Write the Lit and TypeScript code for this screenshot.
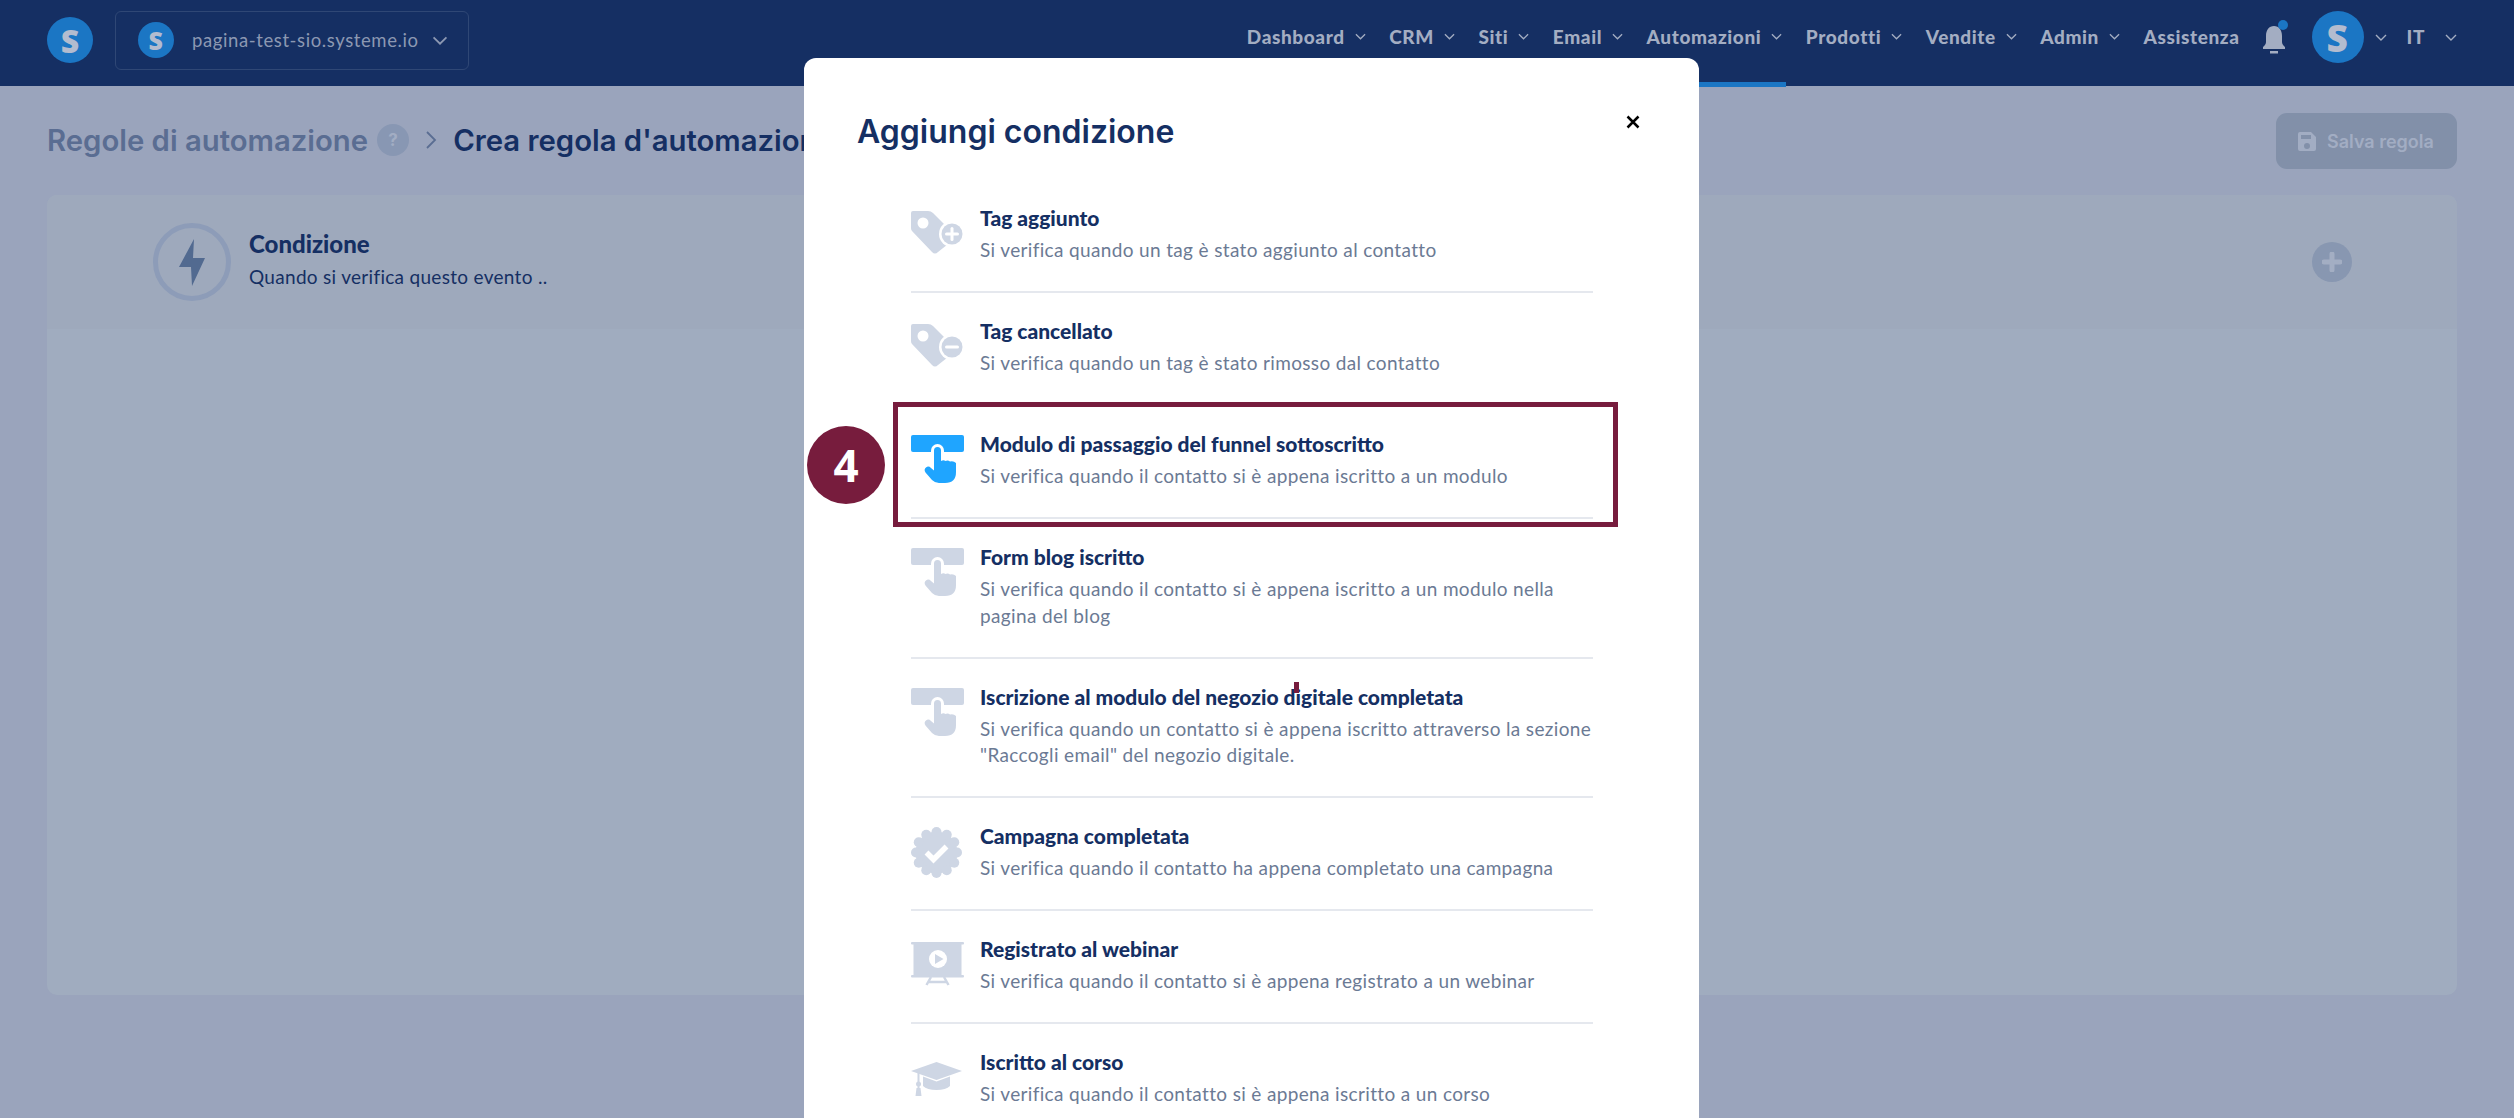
import { LitElement, css, html, nothing, svg } from 'lit';
import { customElement } from 'lit/decorators.js';
import { classMap } from 'lit/directives/class-map.js';

const NAV = [
  { label: 'Dashboard', arrow: true },
  { label: 'CRM', arrow: true },
  { label: 'Siti', arrow: true },
  { label: 'Email', arrow: true },
  { label: 'Automazioni', arrow: true, active: true },
  { label: 'Prodotti', arrow: true },
  { label: 'Vendite', arrow: true },
  { label: 'Admin', arrow: true },
  { label: 'Assistenza', arrow: false },
];

const ITEMS = [
  { icon: 'tagPlus', title: 'Tag aggiunto', desc: 'Si verifica quando un tag è stato aggiunto al contatto' },
  { icon: 'tagMinus', title: 'Tag cancellato', desc: 'Si verifica quando un tag è stato rimosso dal contatto' },
  { icon: 'hand', active: true, title: 'Modulo di passaggio del funnel sottoscritto', desc: 'Si verifica quando il contatto si è appena iscritto a un modulo' },
  { icon: 'hand', title: 'Form blog iscritto', desc: 'Si verifica quando il contatto si è appena iscritto a un modulo nella pagina del blog' },
  { icon: 'hand', title: 'Iscrizione al modulo del negozio digitale completata', desc: 'Si verifica quando un contatto si è appena iscritto attraverso la sezione "Raccogli email" del negozio digitale.' },
  { icon: 'badge', title: 'Campagna completata', desc: 'Si verifica quando il contatto ha appena completato una campagna' },
  { icon: 'webinar', title: 'Registrato al webinar', desc: 'Si verifica quando il contatto si è appena registrato a un webinar' },
  { icon: 'cap', title: 'Iscritto al corso', desc: 'Si verifica quando il contatto si è appena iscritto a un corso' },
];

const chevron = (cls: string) => html`<svg class=${cls} viewBox="0 0 12 7" fill="none" stroke="currentColor" stroke-width="1.4"><path d="M1 1l5 5 5-5" /></svg>`;

const logo = (cls: string) => html`<span class=${cls}>S</span>`;

const tag = (minus: boolean) => html`<svg class="ico tag" viewBox="0 0 53 44">
  <path d="M2 0H17Q20 0 22 2L46 26L27 41Q24 44 21 41L1 20Q0 19 0 17V2Q0 0 2 0Z" />
  <circle cx="12" cy="12" r="5.5" fill="#fff" />
  <circle cx="41" cy="23" r="13" fill="#fff" />
  <circle cx="41" cy="23" r="10.5" />
  <path d="M35.5 23H46.5" stroke="#fff" stroke-width="3" stroke-linecap="round" />
  ${minus ? nothing : svg`<path d="M41 17.5V28.5" stroke="#fff" stroke-width="3" stroke-linecap="round" />`}
</svg>`;

const hand = () => html`<svg class="ico hand" viewBox="0 0 53 48">
  <rect width="53" height="17" rx="2" />
  <rect x="20" y="9" width="13" height="24" rx="6.500" fill="#fff" />
  <path d="M23 15.500a3.500 3.500 0 0 1 7 0V26q2.500-1.500 4.500 0q2.500-1 4.500 .5q3.500-1 6 1.500V37q0 11-11 11H28q-4 0-7-3L14.500 37.500q-2-3 .5-5t5 .5l3 2.500Z" />
</svg>`;

const badge = () => {
  const lobes = Array.from({ length: 12 }, (_, i) => {
    const a = (i * Math.PI) / 6;
    return svg`<circle cx=${25.5 + 20.5 * Math.cos(a)} cy=${25.5 + 20.5 * Math.sin(a)} r="5" />`;
  });
  return html`<svg class="ico badge" viewBox="0 0 51 51">
    <circle cx="25.5" cy="25.5" r="21" />
    ${lobes}
    <path d="M15.500 25.500L22.500 32.500L35.500 19.500" fill="none" stroke="#fff" stroke-width="5.500" />
  </svg>`;
};

const webinar = () => html`<svg class="ico webinar" viewBox="0 0 53 44">
  <rect width="53" height="2.500" rx="1" />
  <rect x="2.500" y="2" width="48" height="32" />
  <rect y="33" width="53" height="2.500" rx="1" />
  <path d="M20 35L15.500 43M33 35L37.500 43M17 40H36" fill="none" stroke="#ced6e4" stroke-width="2.500" />
  <circle cx="27" cy="17" r="9" fill="#fff" />
  <path d="M24 12L32.500 17L24 22Z" />
</svg>`;

const cap = () => html`<svg class="ico cap" viewBox="0 0 51 35">
  <path d="M25.500 0L51 9L25.500 18L0 9Z" />
  <path d="M12 14.500L25.500 19.500L39 14.500V24Q35 28 25.500 28Q16 28 12 24Z" />
  <rect x="6.500" y="10" width="2" height="17" />
  <circle cx="7.500" cy="22" r="2.500" />
  <path d="M5.500 26H9.500L10.500 34H4.500Z" />
</svg>`;

const ICONS: Record<string, () => unknown> = {
  tagPlus: () => tag(false),
  tagMinus: () => tag(true),
  hand,
  badge,
  webinar,
  cap,
};

@customElement('app-root')
export class AppRoot extends LitElement {
  static styles = css`
    :host {
      display: block;
      position: relative;
      height: 100vh;
      overflow: hidden;
      background: #9aa4bc;
      font-family: 'Inter', 'Liberation Sans', sans-serif;
    }

    /* top bar */
    .nav {
      display: flex;
      align-items: center;
      height: 86px;
      padding: 0 57px 6px 47px;
      box-sizing: border-box;
      background: #152f63;
      color: #a3adc2;
    }
    .logo {
      display: flex;
      align-items: center;
      justify-content: center;
      flex: none;
      border-radius: 50%;
      background: #1b76c4;
      color: #b3bccf;
      font-family: 'Open Sans', sans-serif;
      font-weight: 800;
    }
    .logo-main { width: 46px; height: 46px; font-size: 32px; }
    .logo-site { width: 36px; height: 36px; font-size: 25px; }
    .logo-user { width: 52px; height: 52px; font-size: 37px; }
    .site {
      display: flex;
      align-items: center;
      width: 354px;
      height: 59px;
      box-sizing: border-box;
      margin-left: 22px;
      padding-left: 22px;
      border: 1px solid #2f4775;
      border-radius: 6px;
      font-family: 'Lato', sans-serif;
      font-size: 18.500px;
      letter-spacing: 0.6px;
      color: #8c98b2;
    }
    .site .name { margin-left: 18px; }
    .site svg { width: 16px; height: 9px; margin-left: 13px; }
    .menu {
      display: flex;
      align-items: center;
      align-self: flex-start;
      height: 74px;
      margin-left: auto;
      font-family: 'Lato', sans-serif;
      font-weight: 900;
      font-size: 19px;
      letter-spacing: 0.6px;
    }
    .menu-item {
      display: flex;
      align-items: center;
      gap: 10px;
      margin: 0 23.500px 2px 0;
      position: relative;
    }
    .menu-item.last { margin-right: 22px; }
    .menu-item.active::after {
      content: '';
      position: absolute;
      left: -14px;
      right: -4px;
      top: 57px;
      height: 5px;
      background: #1b76c4;
    }
    .arrow { width: 11px; height: 7px; }
    .bell { width: 28px; height: 34px; margin-right: 22px; }
    .user-arrow { margin: 0 20px 0 11px; width: 12px; }
    .lang { margin: 0 20px 2px 0; }
    .lang-arrow { width: 12px; }

    /* page behind the dialog */
    .head {
      display: flex;
      align-items: center;
      padding: 27px 57px 26px 47px;
      height: 56px;
    }
    .crumb {
      font-size: 29.300px;
      font-weight: 600;
      color: #5a6d92;
      white-space: nowrap;
      margin-bottom: 2px;
    }
    .crumb.current { color: #152f63; margin-left: 16px; }
    .help {
      display: flex;
      align-items: center;
      justify-content: center;
      width: 32px;
      height: 32px;
      margin: 0 16px 2px 9px;
      border-radius: 50%;
      background: #8897b3;
      color: #a2adc3;
      font-size: 17px;
      font-weight: 700;
    }
    .crumb-arrow { width: 12px; height: 24px; color: #5a6d92; margin-bottom: 2px; }
    .save {
      display: flex;
      align-items: center;
      gap: 11px;
      margin-left: auto;
      width: 181px;
      height: 56px;
      box-sizing: border-box;
      padding-left: 22px;
      border-radius: 11px;
      background: #8290a9;
      color: #a2adc3;
      font-size: 18px;
      font-weight: 600;
      white-space: nowrap;
    }
    .save svg { width: 18px; height: 19px; }
    .card {
      margin: 0 57px 0 47px;
      height: 800px;
      border-radius: 10px;
      background: #a0acbf;
      overflow: hidden;
    }
    .rule {
      display: flex;
      align-items: center;
      height: 134px;
      box-sizing: border-box;
      padding: 0 105px 0 106px;
      background: #9ea9bc;
    }
    .ring { width: 78px; height: 78px; flex: none; }
    .rule-text { margin: 0 0 3px 18px; font-family: 'Lato', sans-serif; color: #152f63; }
    .rule-title { font-size: 24px; font-weight: 900; line-height: 30px; }
    .rule-desc { font-size: 19px; line-height: 30px; margin-top: 3px; letter-spacing: 0.3px; }
    .add {
      display: flex;
      align-items: center;
      justify-content: center;
      width: 40px;
      height: 40px;
      margin-left: auto;
      border-radius: 50%;
      background: #8897b1;
    }
    .add svg { width: 20px; height: 20px; }

    /* dialog */
    .modal {
      position: absolute;
      left: 804px;
      top: 58px;
      width: 895px;
      height: 1100px;
      box-sizing: border-box;
      border-radius: 12px;
      background: #fff;
    }
    .modal-head {
      display: flex;
      align-items: center;
      justify-content: space-between;
      height: 122px;
      padding: 24px 59px 0 53px;
      box-sizing: border-box;
    }
    .modal-title {
      margin: 0;
      font-size: 32px;
      font-weight: 600;
      color: #152f63;
    }
    .close { width: 14px; height: 14px; margin-bottom: 18px; }
    .list { margin: 0 106px 0 107px; }
    .item {
      display: flex;
      border-bottom: 2px solid #e5e8ee;
      padding: 25px 0 27.500px;
    }
    .item:last-child { border-bottom: 0; }
    .icon-box { width: 69px; flex: none; }
    .ico { display: block; fill: #ced6e4; }
    .item.active .ico { fill: #1fa5ff; }
    .tag { width: 53px; height: 44px; margin-top: 6px; }
    .hand { width: 53px; height: 48px; margin-top: 4px; }
    .badge { width: 51px; height: 51px; margin-top: 4px; }
    .webinar { width: 53px; height: 44px; margin-top: 6px; }
    .cap { width: 51px; height: 35px; margin-top: 13px; }
    .item-title {
      font-family: 'Lato', sans-serif;
      font-size: 21px;
      font-weight: 900;
      line-height: 26px;
      color: #152f63;
      margin-bottom: 6px;
    }
    .item-desc {
      font-family: 'Lato', sans-serif;
      font-size: 19px;
      line-height: 26.500px;
      letter-spacing: 0.35px;
      color: #6b7a94;
    }

    /* annotation drawn on top of the screenshot */
    .mark-box {
      position: absolute;
      left: 893px;
      top: 402px;
      width: 725px;
      height: 125px;
      box-sizing: border-box;
      border: 5px solid #771c3d;
    }
    .mark-num {
      position: absolute;
      left: 807px;
      top: 426px;
      width: 78px;
      height: 78px;
      display: flex;
      align-items: center;
      justify-content: center;
      border-radius: 50%;
      background: #771c3d;
      color: #fff;
      font-family: 'Open Sans', sans-serif;
      font-size: 44px;
      font-weight: 700;
    }
    .mark-tick {
      position: absolute;
      left: 1294px;
      top: 682px;
      width: 5px;
      height: 11px;
      background: #771c3d;
    }
  `;

  renderMenu() {
    return NAV.map(
      (n, i) => html`<div class=${classMap({ 'menu-item': true, active: !!n.active, last: i === NAV.length - 1 })}>
        ${n.label}${n.arrow ? chevron('arrow') : nothing}
      </div>`
    );
  }

  renderItem(item: (typeof ITEMS)[number]) {
    return html`<div class=${classMap({ item: true, active: !!item.active })}>
      <div class="icon-box">${ICONS[item.icon]()}</div>
      <div>
        <div class="item-title">${item.title}</div>
        <div class="item-desc">${item.desc}</div>
      </div>
    </div>`;
  }

  render() {
    return html`
      <header class="nav">
        ${logo('logo logo-main')}
        <div class="site">
          ${logo('logo logo-site')}
          <span class="name">pagina-test-sio.systeme.io</span>
          ${chevron('')}
        </div>
        <nav class="menu">
          ${this.renderMenu()}
          <svg class="bell" viewBox="0 0 28 34">
            <path fill="#a3adc2" d="M12 6c-5 0-8 4-8 10v6c0 2-1 3-3 5v2h22v-2c-2-2-3-3-3-5v-6c0-6-3-10-8-10zM8 31h8v2.500H8z" />
            <circle cx="21" cy="5" r="5" fill="#1b76c4" />
          </svg>
          ${logo('logo logo-user')}
          ${chevron('user-arrow')}
          <span class="lang">IT</span>
          ${chevron('lang-arrow')}
        </nav>
      </header>

      <div class="head">
        <span class="crumb">Regole di automazione</span>
        <span class="help">?</span>
        <svg class="crumb-arrow" viewBox="0 0 12 24" fill="none" stroke="currentColor" stroke-width="1.800"><path d="M2 4l8 8-8 8" /></svg>
        <span class="crumb current">Crea regola d'automazione</span>
        <div class="save">
          <svg viewBox="0 0 18 19"><path fill="#a2adc3" d="M2 0h11l5 5v12a2 2 0 0 1-2 2H2a2 2 0 0 1-2-2V2a2 2 0 0 1 2-2zm1 3v4h10V3zm6 8a3 3 0 1 0 0 6 3 3 0 0 0 0-6z" fill-rule="evenodd" /></svg>
          Salva regola
        </div>
      </div>

      <section class="card">
        <div class="rule">
          <svg class="ring" viewBox="0 0 78 78">
            <circle cx="39" cy="39" r="36.500" fill="none" stroke="#8d9cb8" stroke-width="5" />
            <path fill="#526a90" d="M41 16L26 44H38L39 63L52 35H40Z" />
          </svg>
          <div class="rule-text">
            <div class="rule-title">Condizione</div>
            <div class="rule-desc">Quando si verifica questo evento ..</div>
          </div>
          <div class="add">
            <svg viewBox="0 0 20 20"><path d="M10 2v16M2 10h16" stroke="#a3aec3" stroke-width="5" stroke-linecap="round" /></svg>
          </div>
        </div>
      </section>

      <div class="modal">
        <div class="modal-head">
          <h2 class="modal-title">Aggiungi condizione</h2>
          <svg class="close" viewBox="0 0 14 14"><path d="M1.500 1.500l11 11M12.500 1.500l-11 11" stroke="#000" stroke-width="2.500" /></svg>
        </div>
        <div class="list">${ITEMS.map(i => this.renderItem(i))}</div>
      </div>

      <div class="mark-box"></div>
      <div class="mark-num">4</div>
      <div class="mark-tick"></div>
    `;
  }
}
